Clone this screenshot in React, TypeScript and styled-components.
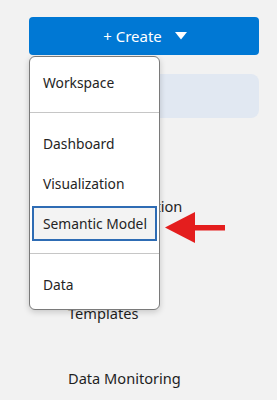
import React from "react";
import styled, { createGlobalStyle } from "styled-components";

const Global = createGlobalStyle`
  html, body { margin: 0; padding: 0; background: #f2f2f2; }
  body { font-family: "Noto Sans", "Liberation Sans", sans-serif; color: #1f1f1f; }
`;

const Page = styled.div`
  width: 277px;
  height: 400px;
  overflow: hidden;
  position: relative;
  background: #f2f2f2;
`;

const Column = styled.div`
  padding: 17px 0 0 29px;
  width: 230px;
  display: flex;
  flex-direction: column;
`;

const CreateWrap = styled.div`
  position: relative;
`;

const CreateButton = styled.button`
  width: 230px;
  height: 38px;
  border: none;
  border-radius: 4px;
  background: #0078d4;
  color: #ffffff;
  font-family: inherit;
  font-size: 15px;
  display: flex;
  align-items: center;
  justify-content: center;
  gap: 13px;
  padding: 0 0 0 2px;
`;

const Caret = styled.svg`
  width: 12px;
  height: 8px;
  display: block;
`;

const Highlight = styled.div`
  margin-top: 19px;
  height: 44px;
  border-radius: 8px;
  background: #e1e8f2;
`;

const Nav = styled.div`
  display: flex;
  flex-direction: column;
  padding-left: 39px;
`;

const NavItem = styled.div<{ $gap: number }>`
  margin-top: ${(p) => p.$gap}px;
  font-size: 14.6px;
  line-height: 20px;
  color: #1f1f1f;
  white-space: nowrap;
`;

const Menu = styled.div`
  position: absolute;
  top: 39px;
  left: 0;
  width: 129px;
  padding: 5px 0;
  background: #ffffff;
  border: 1px solid #7a7a7a;
  border-radius: 6px;
  box-shadow: 0 2px 6px rgba(0, 0, 0, 0.18);
  display: flex;
  flex-direction: column;
  z-index: 2;
`;

const MenuItem = styled.div<{ $selected?: boolean }>`
  height: ${(p) => (p.$selected ? "35px" : "40px")};
  margin: ${(p) => (p.$selected ? "3px 2px 2px" : "0")};
  padding-left: ${(p) => (p.$selected ? "9px" : "13px")};
  border: ${(p) => (p.$selected ? "2px solid #2e6cb4" : "none")};
  background: ${(p) => (p.$selected ? "#f3f3f3" : "transparent")};
  box-sizing: border-box;
  display: flex;
  align-items: center;
  font-size: 13.8px;
  color: #242424;
  white-space: nowrap;
`;

const Separator = styled.div`
  height: 1px;
  margin: 10px 0;
  background: #c6c6c6;
`;

const Arrow = styled.svg`
  position: absolute;
  left: 165px;
  top: 212px;
  width: 60px;
  height: 31px;
  z-index: 3;
`;

export default function App() {
  return (
    <Page>
      <Global />
      <Column>
        <CreateWrap>
          <CreateButton>
            <span>+ Create</span>
            <Caret viewBox="0 0 12 8">
              <polygon points="0,0 12,0 6,7.5" fill="#ffffff" />
            </Caret>
          </CreateButton>
          <Menu>
            <MenuItem>Workspace</MenuItem>
            <Separator />
            <MenuItem>Dashboard</MenuItem>
            <MenuItem>Visualization</MenuItem>
            <MenuItem $selected>Semantic Model</MenuItem>
            <Separator />
            <MenuItem>Data</MenuItem>
          </Menu>
        </CreateWrap>
        <Highlight />
        <Nav>
          <NavItem $gap={78}>Data Exploration</NavItem>
          <NavItem $gap={34}>Data Catalog</NavItem>
          <NavItem $gap={33}>Templates</NavItem>
          <NavItem $gap={45}>Data Monitoring</NavItem>
        </Nav>
      </Column>
      <Arrow viewBox="0 0 60 31">
        <polygon points="0,15.5 30,0 30,31" fill="#e41e1e" />
        <rect x="29" y="13" width="31" height="5.5" fill="#e41e1e" />
      </Arrow>
    </Page>
  );
}
